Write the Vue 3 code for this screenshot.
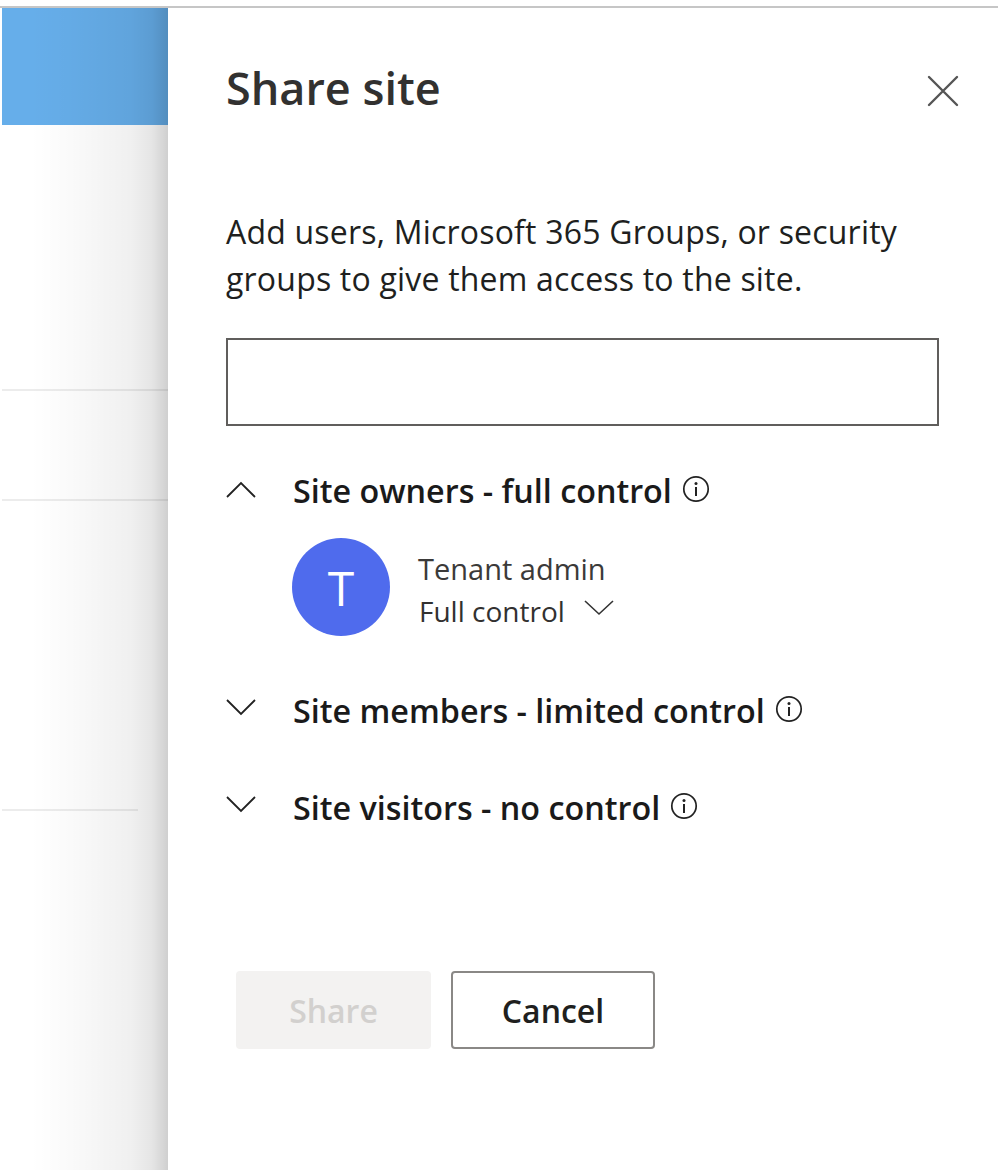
<script setup>
const sections = [
  { title: 'Site owners - full control', open: true },
  { title: 'Site members - limited control', open: false },
  { title: 'Site visitors - no control', open: false }
]
</script>

<template>
  <div class="page">
    <div class="backdrop">
      <div class="hero"></div>
      <div class="list">
        <div class="row row-a"></div>
        <div class="row row-b"></div>
        <div class="row row-c"></div>
      </div>
    </div>

    <div class="panel">
      <div class="panel-head">
        <h1 class="title">Share site</h1>
        <button type="button" class="close-btn" aria-label="Close">
          <svg width="32" height="32" viewBox="0 0 32 32">
            <path d="M2 2 L30 30 M30 2 L2 30" stroke="#555" stroke-width="2.4" fill="none" stroke-linecap="round" />
          </svg>
        </button>
      </div>

      <p class="intro">Add users, Microsoft 365 Groups, or security groups to give them access to the site.</p>

      <div class="search"></div>

      <div v-for="s in sections" :key="s.title" class="section">
        <div class="section-head">
          <svg class="chevron" :class="{ down: !s.open }" width="30" height="18" viewBox="0 0 30 18">
            <path :d="s.open ? 'M1 16 L15 2 L29 16' : 'M1 2 L15 16 L29 2'" stroke="#222" stroke-width="1.8" fill="none" />
          </svg>
          <span class="section-title">{{ s.title }}</span>
          <svg class="info" width="28" height="28" viewBox="0 0 28 28">
            <circle cx="14" cy="14" r="12.2" stroke="#222" stroke-width="1.7" fill="none" />
            <circle cx="14" cy="8.5" r="1.5" fill="#222" />
            <path d="M14 12 V21" stroke="#222" stroke-width="2" />
          </svg>
        </div>
        <div v-if="s.open" class="member">
          <div class="avatar">T</div>
          <div class="member-info">
            <div class="member-name">Tenant admin</div>
            <div class="member-role">
              <span>Full control</span>
              <svg class="role-chevron" width="30" height="17" viewBox="0 0 30 17">
                <path d="M1 2 L15 15 L29 2" stroke="#333" stroke-width="1.6" fill="none" />
              </svg>
            </div>
          </div>
        </div>
      </div>

      <div class="actions">
        <button type="button" class="btn btn-share" disabled>Share</button>
        <button type="button" class="btn btn-cancel">Cancel</button>
      </div>
    </div>
  </div>
</template>

<style scoped>
.page {
  display: flex;
  width: 998px;
  height: 1174px;
  box-sizing: border-box;
  padding-top: 6px;
  background: #fff;
  font-family: "Open Sans", "Noto Sans", sans-serif;
  overflow: hidden;
}

.page::before {
  content: "";
  position: absolute;
  top: 6px;
  left: 0;
  width: 998px;
  height: 2px;
  background: #c6c6c6;
  z-index: 3;
}

.backdrop {
  position: relative;
  width: 168px;
  flex-shrink: 0;
  padding: 2px 0 0 2px;
  box-sizing: border-box;
  height: 1164px;
}

.backdrop::after {
  content: "";
  position: absolute;
  inset: 0;
  background: linear-gradient(90deg, rgba(0, 0, 0, 0) 30px, rgba(0, 0, 0, 0.02) 70px, rgba(0, 0, 0, 0.06) 130px, rgba(0, 0, 0, 0.1) 152px, rgba(0, 0, 0, 0.19) 168px);
}

.hero {
  height: 117px;
  background: #66aeea;
}

.list {
  padding-top: 264px;
}

.row {
  border-bottom: 2px solid #ececec;
}

.row-a {
  height: 0;
}

.row-b {
  margin-top: 108px;
}

.row-c {
  margin-top: 308px;
  margin-right: 30px;
}

.panel {
  flex: 1;
  min-width: 0;
  padding: 2px 0 0 58px;
  color: #201f1e;
}

.panel-head {
  display: flex;
  align-items: flex-start;
  justify-content: space-between;
  padding-right: 39px;
}

.title {
  margin: 0;
  padding-top: 50px;
  font-size: 45px;
  line-height: 60px;
  font-weight: 600;
  color: #323130;
}

.close-btn {
  margin-top: 67px;
  padding: 0;
  border: none;
  background: transparent;
  display: flex;
}

.intro {
  margin: 90px 0 0;
  width: 690px;
  font-size: 32px;
  letter-spacing: 0.2px;
  line-height: 47px;
  color: #201f1e;
}

.search {
  width: 713px;
  height: 88px;
  margin-top: 36px;
  box-sizing: border-box;
  border: 2px solid #605e5c;
}

.section {
  margin-top: 39px;
}

.section + .section {
  margin-top: 47px;
}

.section-head {
  display: flex;
  align-items: center;
  height: 50px;
}

.chevron {
  margin-right: 37px;
}

.chevron.down {
  margin-top: -6px;
}

.section-title {
  font-size: 32.3px;
  font-weight: 600;
  color: #1a1a1a;
}

.info {
  margin: -2px 0 0 10px;
}

.member {
  display: flex;
  align-items: center;
  margin: 23px 0 0 66px;
  padding-bottom: 2px;
}

.avatar {
  width: 98px;
  height: 98px;
  border-radius: 50%;
  background: #4f6bed;
  color: #fff;
  font-size: 48px;
  display: flex;
  align-items: center;
  justify-content: center;
}

.member-info {
  margin-left: 28px;
  padding-top: 6px;
}

.member-name {
  font-size: 29px;
  line-height: 42px;
  color: #3b3a39;
}

.member-role {
  display: flex;
  align-items: center;
  gap: 19px;
  margin-left: 1px;
  font-size: 28px;
  line-height: 42px;
  color: #323130;
}

.role-chevron {
  margin-top: -8px;
}

.actions {
  display: flex;
  gap: 20px;
  margin: 139px 0 0 10px;
}

.btn {
  height: 78px;
  box-sizing: border-box;
  border-radius: 4px;
  font-family: inherit;
  font-size: 32px;
  font-weight: 600;
  padding: 0;
}

.btn-share {
  width: 195px;
  border: none;
  background: #f3f2f1;
  color: #d2d0ce;
}

.btn-cancel {
  width: 204px;
  border: 2px solid #8a8886;
  background: #fff;
  color: #201f1e;
}
</style>

<style>
html,
body {
  margin: 0;
  background: #fff;
}
</style>
